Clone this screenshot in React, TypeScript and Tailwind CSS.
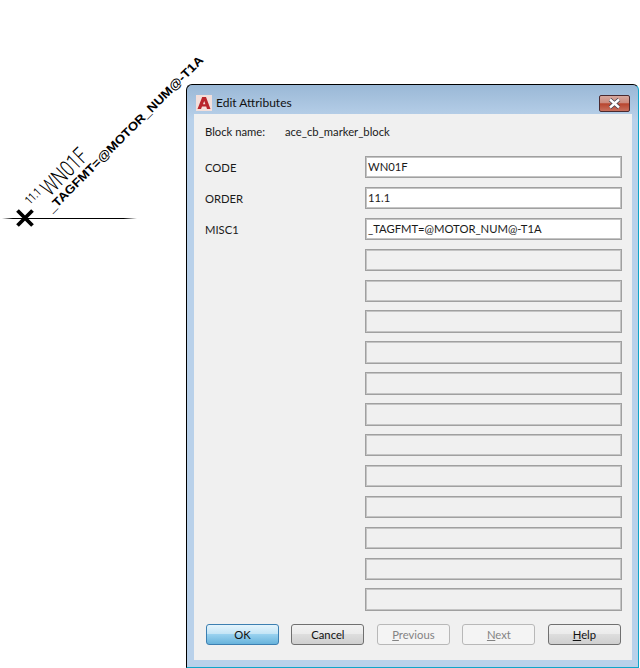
const FIELDS = [
  { label: "CODE", value: "WN01F" },
  { label: "ORDER", value: "11.1" },
  { label: "MISC1", value: "_TAGFMT=@MOTOR_NUM@-T1A" },
  ...Array.from({ length: 12 }, () => ({ label: "", value: null as string | null })),
];

function CadMarker() {
  return (
    <svg width="186" height="240" className="shrink-0 overflow-visible">
      <defs>
        <linearGradient id="line" x1="0" x2="1" y1="0" y2="0">
          <stop offset="0" stopColor="#000" stopOpacity="0" />
          <stop offset="0.08" stopColor="#000" />
          <stop offset="0.9" stopColor="#000" />
          <stop offset="1" stopColor="#000" stopOpacity="0" />
        </linearGradient>
      </defs>
      <rect x="2" y="218" width="135" height="1" fill="url(#line)" />
      <path d="M17.5 210.5 L32.5 225.5 M32.5 210.5 L17.5 225.5" stroke="#000" strokeWidth="3.8" />
      <text
        transform="translate(30 205) rotate(-45)"
        fontFamily="Roboto, sans-serif"
        fontSize="12"
        textLength="17"
        lengthAdjust="spacingAndGlyphs"
        fill="#000"
      >
        11.1
      </text>
      <text
        transform="translate(50 197) rotate(-45)"
        fontFamily="Roboto, sans-serif"
        fontSize="23"
        fontWeight="300"
        textLength="56"
        lengthAdjust="spacingAndGlyphs"
        fill="#000"
      >
        WN01F
      </text>
      <text
        transform="translate(52 213) rotate(-45)"
        fontFamily="'Liberation Sans', sans-serif"
        fontSize="12"
        fontWeight="700"
        textLength="215"
        lengthAdjust="spacingAndGlyphs"
        fill="#000"
      >
        _TAGFMT=@MOTOR_NUM@-T1A
      </text>
    </svg>
  );
}

function CloseButton() {
  return (
    <div className="w-[31px] h-[17px] rounded-[2px] border border-[#4a2a30] bg-[linear-gradient(#d6a89e_0%,#cc8a7e_45%,#b8452f_52%,#c8705e_100%)] flex items-center justify-center">
      <svg width="13" height="11" viewBox="0 0 13 11">
        <path d="M2 1.5 L11 9.5 M11 1.5 L2 9.5" stroke="#3c3f4c" strokeWidth="3.8" />
        <path d="M2 1.5 L11 9.5 M11 1.5 L2 9.5" stroke="#fff" strokeWidth="2.4" />
      </svg>
    </div>
  );
}

function DialogButton({ children, state }: { children: React.ReactNode; state?: "default" | "disabled" }) {
  let cls = "border-[#707070] bg-[linear-gradient(#f2f2f2_0%,#ebebeb_45%,#dddddd_50%,#cfcfcf_100%)] text-[#111]";
  if (state === "default") {
    cls = "border-[#3c7fb1] bg-[linear-gradient(#e5f4fc_0%,#c4e5f6_45%,#98d1ef_50%,#68b3db_100%)] text-[#111]";
  }
  if (state === "disabled") {
    cls = "border-[#b8b8b8] bg-[#f4f4f4] text-[#838383]";
  }
  return (
    <div className={`w-[73px] h-[21px] rounded-[3px] border flex items-center justify-center text-[11.25px] leading-none ${cls}`}>
      {children}
    </div>
  );
}

export default function App() {
  return (
    <div className="w-[640px] h-[668px] bg-white flex items-start overflow-hidden font-['Lato',sans-serif]">
      <CadMarker />

      <div className="mt-[84px] w-[453px] h-[584px] shrink-0 rounded-t-[6px] border border-black border-b-[#10a5c8] border-r-[#10a5c8] bg-[linear-gradient(#9ab8d6_0%,#b9d1ea_6%,#b9d1ea_100%)] flex flex-col pl-[7px] pr-[6px] pb-[7px]">
        {/* Title bar */}
        <div className="h-[29px] shrink-0 pt-[7px] flex items-center">
          <div className="w-[16px] h-[16px] ml-[2px] bg-[#f3dfdb] flex items-center justify-center">
            <svg width="14" height="14" viewBox="0 0 14 14">
              <path d="M0.5 13 L5.2 1 H9 L13.5 13 H10 L9.2 10.6 H5 L4 13 Z M6 8.2 H8.4 L7.2 5 Z" fill="#b9252c" fillRule="evenodd" />
            </svg>
          </div>
          <span className="ml-[4px] text-[12px] text-[#111]">Edit Attributes</span>
          <div className="ml-auto mr-[2px]">
            <CloseButton />
          </div>
        </div>

        {/* Client area */}
        <div className="flex-1 bg-[#f0f0f0] pl-[11px] pr-[10px] pb-[15px] flex flex-col text-[11.25px] text-[#1a1a1a]">
          <div className="flex h-[18px] mt-[9px] items-center">
            <span className="w-[80px]">Block name:</span>
            <span>ace_cb_marker_block</span>
          </div>
          <div className="mt-[15px] flex flex-col gap-[8.5px]">
            {FIELDS.map((f, i) => (
              <div key={i} className="flex items-center h-[22.4px]">
                <span className="w-[160px] pt-[2px]">{f.label}</span>
                <div
                  className={`w-[257px] h-full px-[2px] flex items-center border border-[#a0a0a0] ring-1 ring-inset ring-[#c4c4c4] ${
                    f.value === null ? "bg-[#f0f0f0]" : "bg-white"
                  }`}
                >
                  {f.value}
                </div>
              </div>
            ))}
          </div>
          <div className="mt-auto flex gap-[12.5px] pl-[0.9px]">
            <DialogButton state="default">OK</DialogButton>
            <DialogButton>Cancel</DialogButton>
            <DialogButton state="disabled">
              <span>
                <u>P</u>revious
              </span>
            </DialogButton>
            <DialogButton state="disabled">
              <span>
                <u>N</u>ext
              </span>
            </DialogButton>
            <DialogButton>
              <span>
                <u>H</u>elp
              </span>
            </DialogButton>
          </div>
        </div>
      </div>
    </div>
  );
}
